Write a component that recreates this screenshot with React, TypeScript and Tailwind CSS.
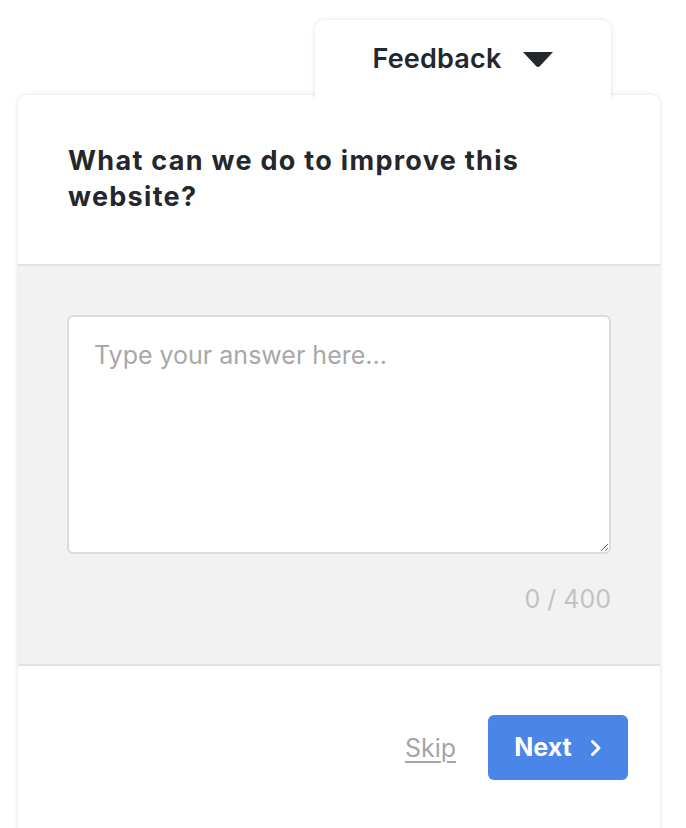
import React from "react";

export default function App() {
  return (
    <div className="min-h-[828px] w-[686px] bg-white overflow-hidden" style={{ fontFamily: "Inter, 'Noto Sans', sans-serif" }}>
      <div className="pt-[20px] pl-[18px] w-[660px] flex flex-col">
        <div className="self-end mr-[49px] relative z-10 w-[296px] h-[80px] -mb-[5px] bg-white rounded-t-[9px] shadow-[0_0_5px_rgba(0,0,0,0.13)] [clip-path:inset(-10px_-10px_0_-10px)] flex items-start justify-center pt-[21px] gap-[20px]">
          <span className="text-[27px] font-semibold text-[#24272b] leading-[36px] tracking-[0.2px]">Feedback</span>
          <svg width="32" height="17" viewBox="0 0 32 17" className="mt-[10px]">
            <path d="M1 1 H31 L18 15 Q16 17 14 15 Z" fill="#24272b" />
          </svg>
        </div>
        <div className="relative bg-white rounded-t-[9px] shadow-[0_0_5px_rgba(0,0,0,0.13)] h-[740px] flex flex-col">
          <div className="pl-[50px] pr-[40px] pt-[48px] pb-[49px] border-b-2 border-[#e2e2e2]">
            <h1 className="max-w-[500px] text-[27px] font-bold leading-[36px] text-[#24272b] tracking-[1.3px]">
              What can we do to improve this website?
            </h1>
          </div>
          <div className="bg-[#f2f2f2] px-[49px] pt-[49px] pb-[50px] border-b-2 border-[#e2e2e2] flex flex-col">
            <div className="relative">
              <textarea
                placeholder="Type your answer here..."
                className="block w-full h-[239px] bg-white border-2 border-[#dcdcdc] rounded-[6px] px-[25px] py-[22px] text-[25px] leading-[32px] text-[#333] placeholder:text-[#a8a8a8] resize outline-none"
              />
            </div>
            <div className="text-right text-[25px] text-[#c2c2c2] mt-[30px] leading-[30px]">0 / 400</div>
          </div>
          <div className="flex justify-end items-center gap-[32px] pr-[32px] pt-[49px]">
            <span className="text-[25px] text-[#a5a5a5] underline underline-offset-[4px] decoration-[2px] leading-[30px]">Skip</span>
            <button className="w-[140px] h-[65px] bg-[#4a86e8] rounded-[6px] flex items-center justify-center gap-[18px] text-white text-[25px] font-bold">
              <span>Next</span>
              <svg width="12" height="18" viewBox="0 0 12 18">
                <path d="M2.5 2.5 L9 9 L2.5 15.5" fill="none" stroke="white" strokeWidth="3" strokeLinecap="round" strokeLinejoin="round" />
              </svg>
            </button>
          </div>
        </div>
      </div>
    </div>
  );
}
